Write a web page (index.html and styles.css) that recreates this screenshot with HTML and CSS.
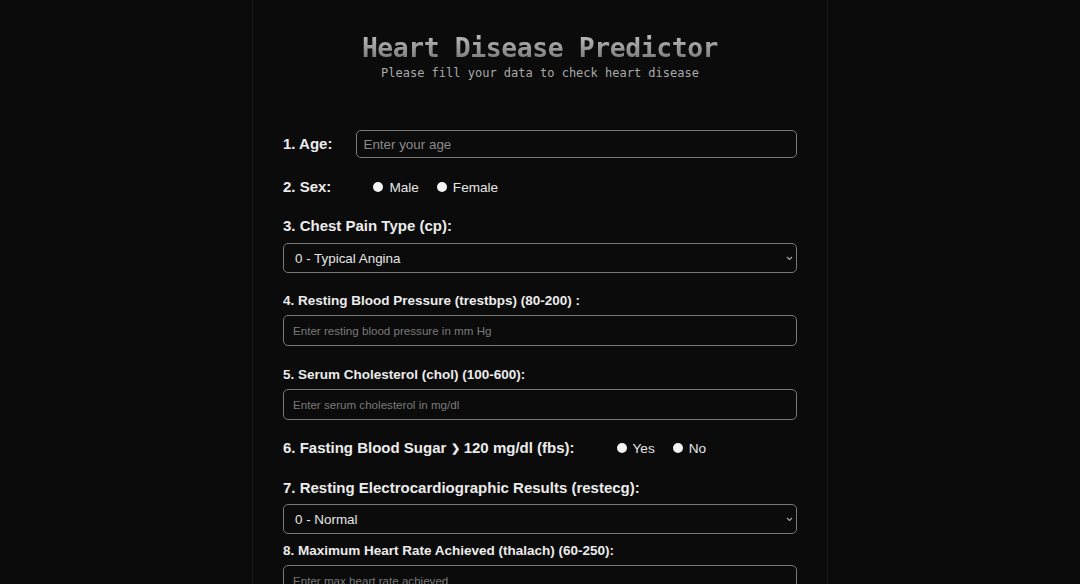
FILE: index.html
```html
<!DOCTYPE html>
<html lang="en">
<head>
<meta charset="utf-8">
<title>Heart Disease Predictor</title>
<link rel="stylesheet" href="styles.css">
</head>
<body>
<main class="card">
  <header class="head">
    <h1 class="title">Heart Disease Predictor</h1>
    <p class="subtitle">Please fill your data to check heart disease</p>
  </header>
  <form class="form">
    <div class="row row-age">
      <label class="label-lg" for="age">1. Age:</label>
      <input class="field field-lg" id="age" type="text" placeholder="Enter your age">
    </div>
    <div class="row row-radio">
      <span class="label-lg">2. Sex:</span>
      <div class="radios">
        <label class="radio"><input type="radio" name="sex"><span>Male</span></label>
        <label class="radio"><input type="radio" name="sex"><span>Female</span></label>
      </div>
    </div>
    <label class="label-lg block gap-a" for="cp">3. Chest Pain Type (cp):</label>
    <div class="select-wrap">
      <select class="field select" id="cp">
        <option>0 - Typical Angina</option>
      </select>
      <svg class="chev" width="7" height="5" viewBox="0 0 7 5"><path d="M1 1 L3.5 3.5 L6 1" fill="none" stroke="#aaa" stroke-width="1.1"/></svg>
    </div>
    <label class="label-sm block gap-b" for="trestbps">4. Resting Blood Pressure (trestbps) (80-200) :</label>
    <input class="field field-sm" id="trestbps" type="text" placeholder="Enter resting blood pressure in mm Hg">
    <label class="label-sm block gap-c" for="chol">5. Serum Cholesterol (chol) (100-600):</label>
    <input class="field field-sm" id="chol" type="text" placeholder="Enter serum cholesterol in mg/dl">
    <div class="row row-radio row-fbs">
      <span class="label-lg">6. Fasting Blood Sugar <span class="gt">❯</span> 120 mg/dl (fbs):</span>
      <div class="radios">
        <label class="radio"><input type="radio" name="fbs"><span>Yes</span></label>
        <label class="radio"><input type="radio" name="fbs"><span>No</span></label>
      </div>
    </div>
    <label class="label-lg block gap-d" for="restecg">7. Resting Electrocardiographic Results (restecg):</label>
    <div class="select-wrap">
      <select class="field select" id="restecg">
        <option>0 - Normal</option>
      </select>
      <svg class="chev" width="7" height="5" viewBox="0 0 7 5"><path d="M1 1 L3.5 3.5 L6 1" fill="none" stroke="#aaa" stroke-width="1.1"/></svg>
    </div>
    <label class="label-sm block gap-e" for="thalach">8. Maximum Heart Rate Achieved (thalach) (60-250):</label>
    <input class="field field-sm" id="thalach" type="text" placeholder="Enter max heart rate achieved">
  </form>
</main>
</body>
</html>
```

FILE: styles.css
```css
* { box-sizing: border-box; }
html, body {
  margin: 0;
  padding: 0;
  background: #0b0b0b;
  color: #ececec;
  font-family: "Liberation Sans", Arial, sans-serif;
  height: 100%;
  overflow: hidden;
}
.card {
  width: 576px;
  margin: 0 auto 0 252px;
  min-height: 100%;
  border-left: 1px solid #1b1b1b;
  border-right: 1px solid #1b1b1b;
  padding: 32px 30px 40px;
}
.head { text-align: center; }
.title {
  margin: 0;
  font-family: "DejaVu Sans Mono", "Liberation Mono", monospace;
  font-weight: bold;
  font-size: 26.4px;
  letter-spacing: -0.4px;
  line-height: 31px;
  background: linear-gradient(180deg, #c2c2c2 0%, #9a9a9a 50%, #707070 100%);
  -webkit-background-clip: text;
  background-clip: text;
  color: transparent;
}
.subtitle {
  margin: 3px 0 0;
  font-family: "DejaVu Sans Mono", "Liberation Mono", monospace;
  font-size: 12px;
  line-height: 15px;
  color: #a9a9a9;
}
.form { margin-top: 49px; display: flex; flex-direction: column; }
.row { display: flex; align-items: center; }
.row-age { height: 28px; }
.row-radio { height: 20px; margin-top: 19px; }
.row-fbs { margin-top: 18px; }
.label-lg {
  font-weight: bold;
  font-size: 15px;
  line-height: 20px;
  color: #ececec;
}
.gt { font-size: 11px; vertical-align: 1px; }
.label-sm {
  font-weight: bold;
  font-size: 13.5px;
  line-height: 18px;
  color: #ececec;
}
.block { display: block; }
.gap-a { margin-top: 19px; margin-bottom: 7px; }
.gap-b { margin-top: 19px; margin-bottom: 5px; }
.gap-c { margin-top: 20px; margin-bottom: 5px; }
.gap-d { margin-top: 20px; margin-bottom: 6px; }
.gap-e { margin-top: 8px; margin-bottom: 5px; }
.field {
  display: block;
  width: 100%;
  background: #0b0b0b;
  border: 1px solid #787878;
  border-radius: 5px;
  color: #e6e6e6;
  font-family: "Liberation Sans", Arial, sans-serif;
  outline: none;
}
.field-lg {
  flex: 1;
  margin-left: 24px;
  height: 28px;
  padding: 0 6px;
  font-size: 13.4px;
}
.field-lg::placeholder { color: #8a8a8a; }
.field-sm {
  height: 31px;
  padding: 0 9px;
  font-size: 11.6px;
}
.field-sm::placeholder { color: #7a7a7a; }
.select-wrap { position: relative; }
.select {
  -webkit-appearance: none;
  appearance: none;
  height: 30px;
  padding: 0 11px;
  font-size: 13.4px;
  color: #e6e6e6;
}
.chev { position: absolute; right: 4px; top: 13px; }
.radios { display: flex; align-items: center; margin-left: 42px; gap: 18px; }
.radio {
  display: flex;
  align-items: center;
  gap: 6px;
  font-size: 13.6px;
  color: #e6e6e6;
}
.radio input {
  -webkit-appearance: none;
  appearance: none;
  margin: 0;
  width: 10px;
  height: 10px;
  border-radius: 50%;
  background: #f4f4f4;
}
```
